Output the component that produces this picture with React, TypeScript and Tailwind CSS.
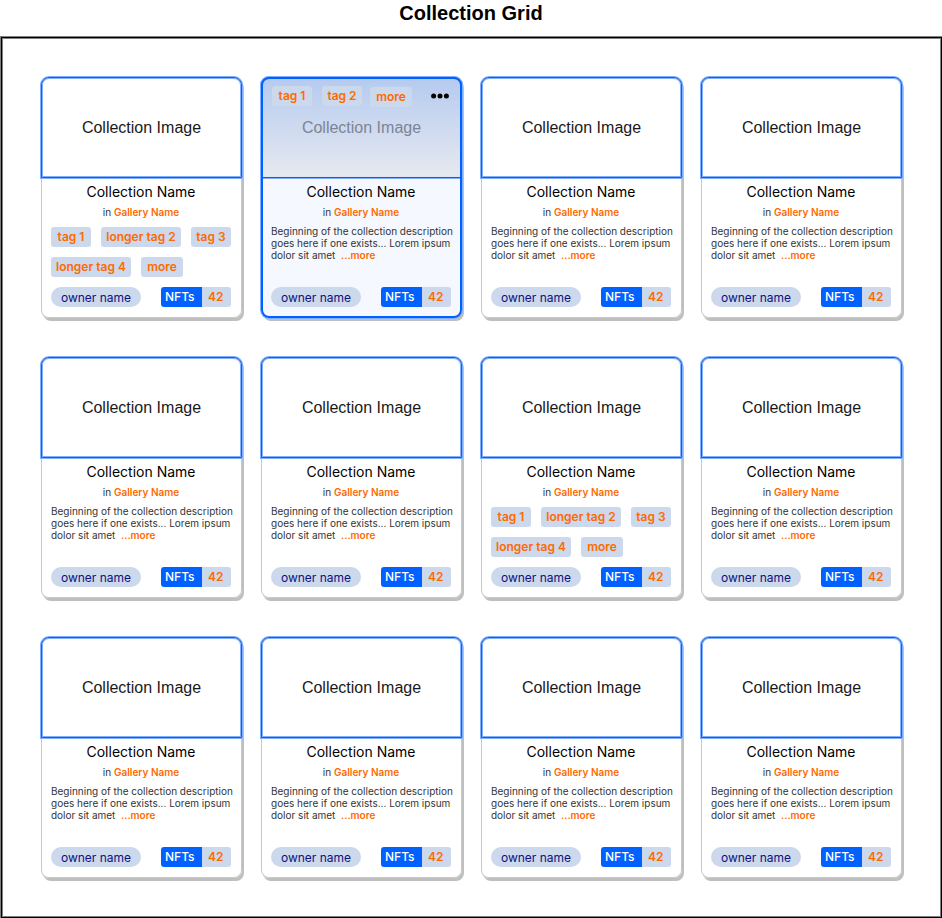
import React from "react";

type Body = "tags" | "description";

interface Item {
  id: number;
  body: Body;
  active?: boolean;
}

const items: Item[] = Array.from({ length: 12 }, (_, id) => ({
  id,
  body: id === 0 || id === 6 ? "tags" : "description",
  active: id === 1,
}));

const tagBase =
  "flex h-5 items-center justify-center rounded-[3px] bg-[#ccd8eb] text-[12px] leading-5 font-semibold text-[#ff6a00]";

function Tag({ label, width }: { label: string; width: string }) {
  return (
    <button type="button" className={`${tagBase} ${width}`}>
      {label}
    </button>
  );
}

function Overlay() {
  return (
    <div className="absolute inset-0 rounded-t-[7px] bg-linear-to-b from-[#b2c8ef]/95 to-[#e6e8ee]/95">
      <div className="flex items-start pt-2 pr-3 pl-[10px]">
        <Tag label="tag 1" width="w-10" />
        <Tag label="tag 2" width="ml-[10px] w-10" />
        <Tag label="more" width="ml-2 mt-px w-[42px]" />
        <button type="button" aria-label="More options" className="ml-auto h-5">
          <svg width="18" height="6" viewBox="0 0 18 6" fill="#000">
            <circle cx="2.6" cy="3" r="2.5" />
            <circle cx="9" cy="3" r="2.5" />
            <circle cx="15.4" cy="3" r="2.5" />
          </svg>
        </button>
      </div>
    </div>
  );
}

function Card({ item }: { item: Item }) {
  return (
    <article
      className={`relative flex h-[241px] flex-col rounded-[8px] shadow-[2px_3px_0_0_#bfbfbf] ${
        item.active ? "bg-[#f5f8ff]" : "bg-white ring-1 ring-[#c8c8c8] ring-inset"
      }`}
    >
      <div
        className={`relative flex h-[101px] shrink-0 items-center justify-center rounded-t-[8px] border border-[#0061ff] shadow-[0_0_0_1px_#80b0ff,inset_0_0_0_1px_#80b0ff] ${
          item.active ? "text-[#7b8594]" : "bg-white text-[#1a1a1a]"
        }`}
      >
        {item.active && <Overlay />}
        <span className="relative font-['Liberation_Sans',Arial,sans-serif] text-[16px] leading-5">
          Collection Image
        </span>
      </div>
      <div className="flex grow flex-col pr-[11px] pb-[11px] pl-[10px]">
        <h2 className="mt-1 text-center text-[14px] leading-5 text-black">Collection Name</h2>
        <p className="mt-1 text-center text-[10px] leading-3 text-[#333]">
          in{" "}
          <a href="#gallery" className="font-semibold text-[#ff6a00]">
            Gallery Name
          </a>
        </p>
        {item.body === "tags" ? (
          <div className="mt-[9px] flex flex-wrap gap-[10px]">
            <Tag label="tag 1" width="w-10" />
            <Tag label="longer tag 2" width="w-20" />
            <Tag label="tag 3" width="w-10" />
            <Tag label="longer tag 4" width="w-20" />
            <Tag label="more" width="w-[42px]" />
          </div>
        ) : (
          <p className="mt-[7px] text-[10px] leading-3 whitespace-nowrap text-[#333]">
            Beginning of the collection description
            <br />
            goes here if one exists... Lorem ipsum
            <br />
            dolor sit amet&nbsp;{" "}
            <a href="#more" className="font-semibold text-[#ff6a00]">
              ...more
            </a>
          </p>
        )}
        <div className="mt-auto flex items-center justify-between">
          <a
            href="#owner"
            className="flex h-5 w-[90px] items-center justify-center rounded-full bg-[#ccd8eb] pt-px text-[12px] text-[#100f80]"
          >
            owner name
          </a>
          <div className="flex h-5 w-[70px] overflow-hidden rounded-[3px] text-[12px] leading-5">
            <span className="w-[41px] bg-[#0061ff] pl-1 font-medium text-white">NFTs</span>
            <span className="grow bg-[#ccd8eb] pl-[6px] font-semibold text-[#ff6a00]">42</span>
          </div>
        </div>
      </div>
      {item.active && (
        <div className="pointer-events-none absolute inset-0 rounded-[8px] border-2 border-[#0061ff] shadow-[0_0_0_1px_#80b0ff]" />
      )}
    </article>
  );
}

export default function App() {
  return (
    <main className="bg-white font-[Inter,'Liberation_Sans',sans-serif]">
      <h1 className="pt-px pb-[11px] text-center font-['Liberation_Sans',Arial,sans-serif] text-[20px] leading-6 font-bold text-black">
        Collection Grid
      </h1>
      <div className="border-t border-l border-[#808080]">
        <div className="border border-black shadow-[inset_0_0_0_1px_#808080]">
          <div className="grid grid-cols-4 gap-x-[19px] gap-y-[39px] p-[39px]">
            {items.map((item) => (
              <Card key={item.id} item={item} />
            ))}
          </div>
        </div>
      </div>
    </main>
  );
}
